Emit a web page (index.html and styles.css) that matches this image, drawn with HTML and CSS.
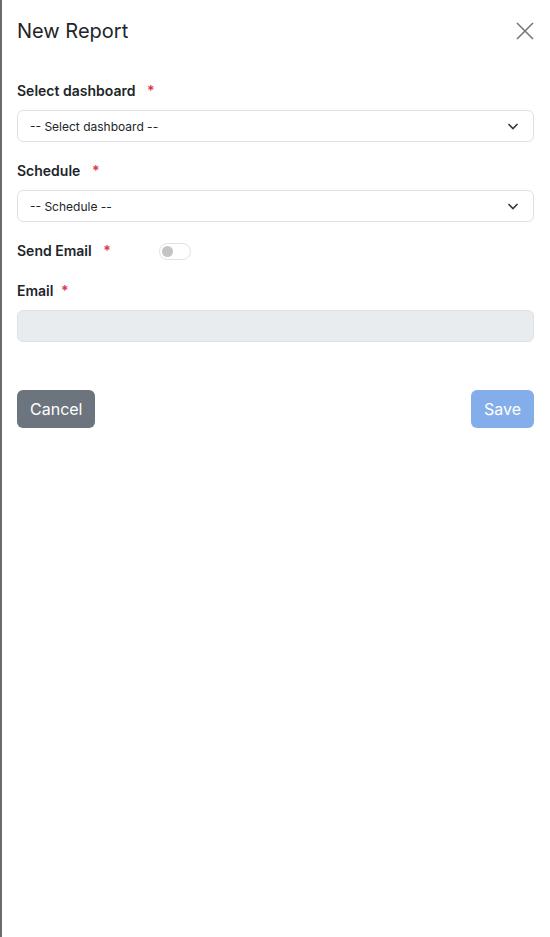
FILE: index.html
```html
<!DOCTYPE html>
<html>
<head>
<meta charset="utf-8">
<link rel="stylesheet" href="styles.css">
</head>
<body>
<div class="panel">
  <div class="header">
    <h1 class="title">New Report</h1>
    <button class="close" aria-label="Close">
      <svg width="18" height="18" viewBox="0 0 18 18"><path d="M1 1L17 17M17 1L1 17" stroke="#777" stroke-width="1.6" fill="none"/></svg>
    </button>
  </div>
  <div class="field">
    <label class="label">Select dashboard <span class="req">*</span></label>
    <div class="select"><span>-- Select dashboard --</span>
      <svg width="12" height="12" viewBox="0 0 12 12"><path d="M1.5 4L6 8.5L10.5 4" stroke="#343a40" stroke-width="1.6" fill="none"/></svg>
    </div>
  </div>
  <div class="field">
    <label class="label">Schedule <span class="req">*</span></label>
    <div class="select"><span>-- Schedule --</span>
      <svg width="12" height="12" viewBox="0 0 12 12"><path d="M1.5 4L6 8.5L10.5 4" stroke="#343a40" stroke-width="1.6" fill="none"/></svg>
    </div>
  </div>
  <div class="switch-row">
    <label class="label">Send Email <span class="req">*</span></label>
    <span class="switch"><span class="knob"></span></span>
  </div>
  <div class="field field-email">
    <label class="label">Email <span class="req req-tight">*</span></label>
    <div class="input disabled"></div>
  </div>
  <div class="actions">
    <button class="btn cancel">Cancel</button>
    <button class="btn save">Save</button>
  </div>
</div>
</body>
</html>
```
FILE: styles.css
```css
html, body { margin: 0; padding: 0; height: 100%; }
body { font-family: Inter, "Noto Sans", sans-serif; color: #212529; background: #fff; }
.panel { box-sizing: border-box; min-height: 937px; border-left: 2px solid #6b6b6b; padding: 0 16px 0 15px; }
.header { display: flex; justify-content: space-between; align-items: center; height: 62px; }
.title { margin: 0; font-size: 20px; font-weight: 400; color: #212529; letter-spacing: 0; }
.close { border: 0; background: none; padding: 0; width: 18px; height: 18px; display: flex; margin-right: 0; }
.field { display: flex; flex-direction: column; }
.label { font-size: 14px; font-weight: 600; color: #212529; line-height: 20px; }
.req { color: #dc3545; margin-left: 8px; }
.req-tight { margin-left: 4px; }
.field .label { margin-top: 19px; margin-bottom: 9px; }
.field-email .label { margin-top: 20px; }
.select, .input { box-sizing: border-box; height: 32px; border: 1px solid #dee2e6; border-radius: 6px; display: flex; align-items: center; justify-content: space-between; padding: 0 14px 0 12px; font-size: 12px; color: #212529; }
.input.disabled { background: #e9ecef; }
.switch-row { display: flex; align-items: center; margin-top: 19px; height: 20px; }
.switch-row .label { width: 142px; }
.switch { box-sizing: border-box; width: 32px; height: 17px; border: 1px solid #dee2e6; border-radius: 9px; display: flex; align-items: center; padding-left: 2px; }
.knob { width: 11px; height: 11px; border-radius: 50%; background: #c4c4c4; }
.actions { display: flex; justify-content: space-between; margin-top: 48px; }
.btn { font-family: Inter, "Noto Sans", sans-serif; font-size: 16px; color: #fff; border: 0; border-radius: 6px; height: 38px; padding: 0 13px; }
.cancel { background: #6c757d; }
.save { background: #84aeea; }
```
